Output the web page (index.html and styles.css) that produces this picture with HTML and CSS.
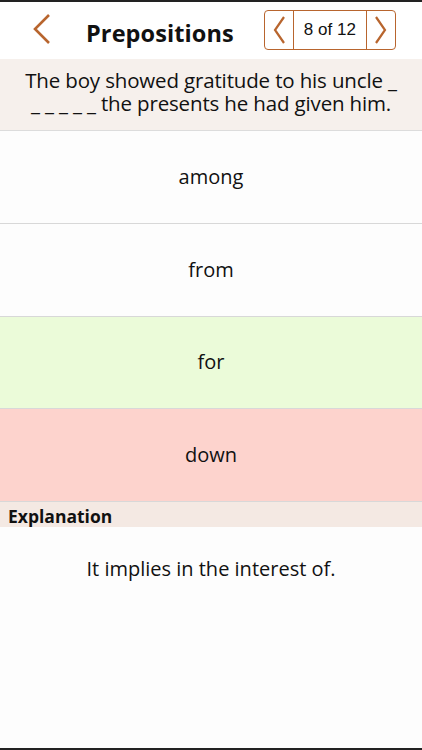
FILE: index.html
```html
<!DOCTYPE html>
<html>
<head>
<meta charset="utf-8">
<link rel="stylesheet" href="styles.css">
</head>
<body>
<div class="screen">
  <header class="topbar">
    <span class="back">
      <svg width="20" height="32" viewBox="0 0 20 32"><path d="M17 2 L3 16 L17 30" fill="none" stroke="#b8652e" stroke-width="2.6"/></svg>
    </span>
    <h1 class="title">Prepositions</h1>
    <div class="pager">
      <span class="pbtn">
        <svg width="14" height="30" viewBox="0 0 14 30"><path d="M12 2 L3 15 L12 28" fill="none" stroke="#b8652e" stroke-width="2.2"/></svg>
      </span>
      <span class="pcount">8 of 12</span>
      <span class="pbtn">
        <svg width="14" height="30" viewBox="0 0 14 30"><path d="M2 2 L11 15 L2 28" fill="none" stroke="#b8652e" stroke-width="2.2"/></svg>
      </span>
    </div>
  </header>
  <section class="question">The boy showed gratitude to his uncle _<br>_ _ _ _ _ the presents he had given him.</section>
  <div class="option">among</div>
  <div class="option">from</div>
  <div class="option correct">for</div>
  <div class="option wrong">down</div>
  <div class="exphead">Explanation</div>
  <div class="exptext">It implies in the interest of.</div>
</div>
</body>
</html>
```
FILE: styles.css
```css
html, body { margin: 0; padding: 0; }
body {
  background: #fdfdfd;
  font-family: "Open Sans", "Noto Sans", sans-serif;
  color: #111;
}
.screen {
  width: 422px;
  height: 750px;
  box-sizing: border-box;
  border-top: 2px solid #222;
  border-bottom: 2px solid #222;
  display: flex;
  flex-direction: column;
  overflow: hidden;
}
.topbar {
  height: 57px;
  flex: none;
  display: flex;
  align-items: center;
  background: #fff;
}
.back {
  width: 20px;
  height: 32px;
  margin-left: 32px;
  margin-top: -3px;
  display: flex;
}
.title {
  margin: 5px 0 0 34px;
  font-size: 23.5px;
  font-weight: 700;
  letter-spacing: 0.1px;
}
.pager {
  margin-left: 30px;
  margin-top: -2px;
  height: 38px;
  display: flex;
  border: 1.5px solid #b8652e;
  border-radius: 4px;
}
.pbtn {
  width: 28px;
  display: flex;
  align-items: center;
  justify-content: center;
}
.pcount {
  width: 72px;
  border-left: 1.5px solid #b8652e;
  border-right: 1.5px solid #b8652e;
  display: flex;
  align-items: center;
  justify-content: center;
  font-family: "Liberation Sans", Arial, sans-serif;
  font-size: 17px;
  color: #111;
}
.question {
  height: 72px;
  flex: none;
  box-sizing: border-box;
  background: #f6f0ec;
  border-bottom: 1px solid #dcdcdc;
  text-align: center;
  font-size: 20.5px;
  line-height: 23px;
  padding-top: 10px;
  letter-spacing: -0.15px;
}
.option {
  height: 92.75px;
  flex: none;
  box-sizing: border-box;
  border-bottom: 1.5px solid #d8d8d8;
  display: flex;
  align-items: center;
  justify-content: center;
  font-size: 20px;
  padding-bottom: 1px;
}
.option.correct { background: #ebfbd9; }
.option.wrong { background: #fdd3cd; }
.exphead {
  height: 25px;
  flex: none;
  background: #f4e9e3;
  font-weight: 700;
  font-size: 17.5px;
  line-height: 28px;
  padding-left: 8px;
}
.exptext {
  text-align: center;
  font-size: 20px;
  line-height: 28px;
  padding-top: 28px;
}
```
